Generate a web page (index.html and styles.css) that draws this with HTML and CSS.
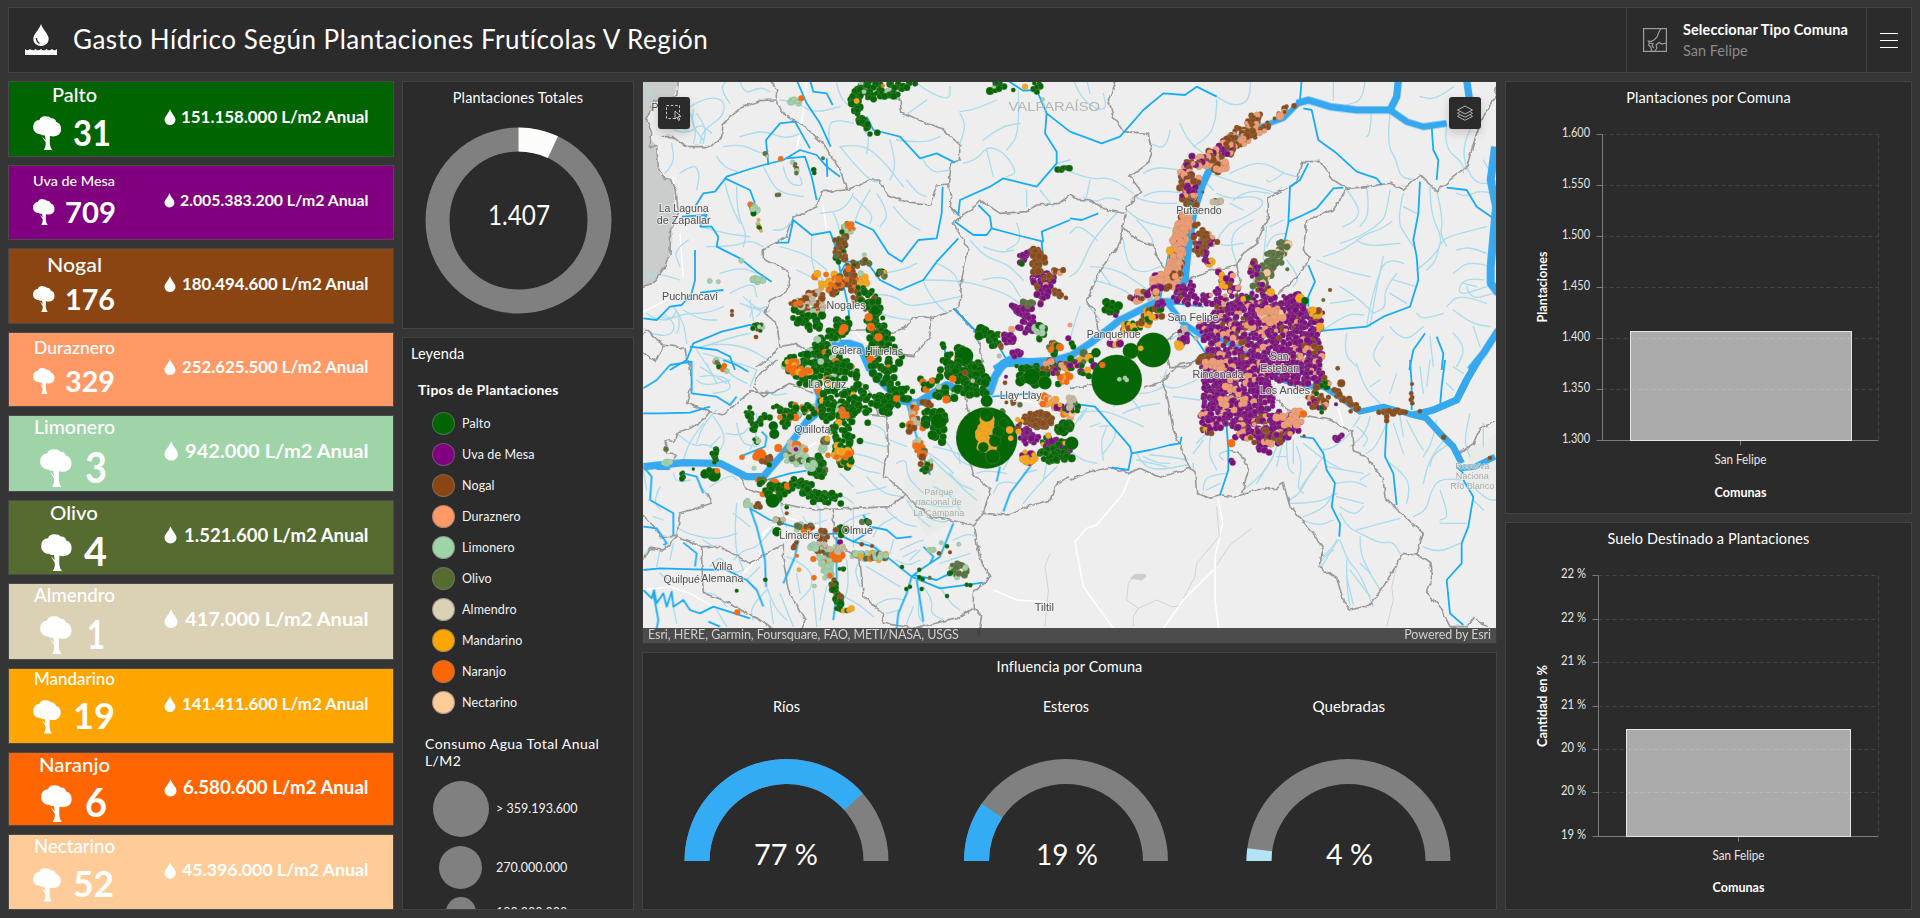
FILE: index.html
```html
<!DOCTYPE html>
<html lang="es">
<head>
<meta charset="utf-8">
<title>Gasto Hídrico Según Plantaciones Frutícolas V Región</title>
<link rel="stylesheet" href="styles.css">
</head>
<body>
<div class="dashboard">
  <header class="header">
    <svg class="brand" width="32" height="32" viewBox="0 0 32 32"><path d="M16 0C14 6 8.300 10.500 8.300 15A7.700 7 0 0 0 23.700 15C23.700 10.500 18 6 16 0Z" fill="#fff"/><path d="M11.500 14Q11.500 18 14.500 19.500" fill="none" stroke="#2b2b2b" stroke-width="1.300"/><path d="M0 25Q2.500 27.500 5 25Q8 27.500 10.500 25Q13 27.500 16 25Q19 27.500 21.500 25Q24 27.500 27 25Q29.500 27.500 32 25V31H0Z" fill="#fff"/></svg>
    <h1 class="title">Gasto Hídrico Según Plantaciones Frutícolas V Región</h1>
    <div class="selector">
      <svg width="24" height="24" viewBox="0 0 24 24" fill="none" stroke="#9d9d9d" stroke-width="1.200"><rect x=".6" y=".6" width="22.800" height="22.800"/><path d="M17.500 1L15.500 5L14 9L11 12L8 13.500L5.500 13L6.500 15L5.500 17L7.500 19L9 23M23 15L19 16L16 14.500L13 17L14 20L12 23M6 15L10 15.500L9 18L11 20"/></svg>
      <div><div class="sel-label">Seleccionar Tipo Comuna</div><div class="sel-value">San Felipe</div></div>
    </div>
    <div class="menu"><i></i><i></i><i></i></div>
  </header>
  <main class="columns">
    <section class="cards" id="cards"></section>
    <div class="col-totals">
      <section class="panel totals">
        <h2>Plantaciones Totales</h2>
        <svg width="230" height="210" viewBox="403 118 230 210">
          <circle cx="518.500" cy="220.500" r="81" fill="none" stroke="#808080" stroke-width="24"/>
          <path d="M518.500 127.500A93 93 0 0 1 558 136.300L547.800 158A69 69 0 0 0 518.500 151.500Z" fill="#fcfcfa"/>
          <text x="488" y="225" class="big" font-size="26" textLength="62" lengthAdjust="spacingAndGlyphs">1.407</text>
        </svg>
      </section>
      <section class="panel legend">
        <h2>Leyenda</h2>
        <h3>Tipos de Plantaciones</h3>
        <ul class="swatches">
          <li><b class="c-palto"></b>Palto</li><li><b class="c-uva"></b>Uva de Mesa</li><li><b class="c-nogal"></b>Nogal</li><li><b class="c-duraznero"></b>Duraznero</li><li><b class="c-limonero"></b>Limonero</li><li><b class="c-olivo"></b>Olivo</li><li><b class="c-almendro"></b>Almendro</li><li><b class="c-mandarino"></b>Mandarino</li><li><b class="c-naranjo"></b>Naranjo</li><li><b class="c-nectarino"></b>Nectarino</li>
        </ul>
        <h4>Consumo Agua Total Anual L/M2</h4>
        <ul class="sizes"><li><span><b class="s56"></b></span>&gt; 359.193.600</li><li><span><b class="s43"></b></span>270.000.000</li><li><span><b class="s30"></b></span>180.000.000</li></ul>
      </section>
    </div>
    <div class="col-map">
      <section class="map">
        <svg width="853" height="561" viewBox="643 82 853 561" id="map">
          <defs>
            <filter id="wob" x="630" y="70" width="880" height="590" filterUnits="userSpaceOnUse" color-interpolation-filters="sRGB"><feTurbulence type="fractalNoise" baseFrequency=".14" numOctaves="2" seed="4"/><feDisplacementMap in="SourceGraphic" scale="4.500" xChannelSelector="R" yChannelSelector="G"/></filter>
          </defs>
          <rect x="643" y="82" width="853" height="561" fill="#eee"/>
          <g transform="translate(640 80) scale(.33333)"><path d="M0 0H115L105 40L95 60L60 60L40 65L20 120L35 180L50 200L55 260L65 290L90 300L108 330L115 400L92 450L90 520L75 560L40 610L0 622Z" fill="#cbcdcd"/></g>
          <g class="road" transform="translate(640 80) scale(.33333)"><path d="M500 0L488 110L470 210M548 370L560 450M120 460L130 590M0 700L80 660M640 750L700 810L730 830M100 290L110 400"/></g>
          <g class="road" transform="translate(640 360) scale(.33333)"><path d="M10 690L90 680L150 700L220 740M310 640L360 590L370 520L430 470L540 500M460 290L540 240M1060 690L1130 720L1210 725M1040 110L1130 120L1290 140"/></g>
          <g class="road" transform="translate(1070 360) scale(.33333)"><path d="M180 345L160 400L80 495L50 505L15 545L40 680L130 805L150 840M445 415L458 490L435 590L435 720L446 805M430 630L340 720L280 805M805 145L820 200"/></g>
          <g class="minor"><g transform="translate(1070 360) scale(.33333)"><path d="M440 440L448 530L380 610L375 650L340 715M545 505L480 555L440 615M190 650L175 670L170 720L205 745L190 770L190 800M205 745L260 720L305 740L325 738M985 600L965 680L970 720L950 800"/><path d="M182 655L195 643L225 643L228 650L215 660Z" fill="#cdcdcd"/></g><g transform="translate(640 360) scale(.33333)"><path d="M1230 580L1215 620L1225 690L1215 800"/></g></g>
          <g fill="#e9ebe8"><path transform="translate(640 360) scale(.33333)" d="M800 340L880 310L950 350L1020 400L1030 470L1000 495L940 480L860 530L830 480L790 400Z"/><path d="M1468 450L1496 435V490L1470 480Z"/></g>
          <g id="streams" class="quebradas"></g>
          <g id="borders" class="borders" filter="url(#wob)"></g>
          <g id="esteros" class="esteros"></g>
          <g id="rivers" class="rivers"></g>
          <g id="dots"></g>
          <g id="labels" class="labels"></g>
        </svg>
        <div class="tool tool-left"><svg width="18" height="18" viewBox="0 0 18 18" fill="none" stroke="#c9c9c9"><path d="M1.500 1.500H14.500V14.500H1.500Z" stroke-dasharray="2.500 1.830"/><path d="M10 7V15L12 13L13.500 16.500L14.800 16L13.300 12.500H16Z" fill="#2b2b2b" stroke-width=".9"/></svg></div>
        <div class="tool tool-right"><svg width="18" height="18" viewBox="0 0 18 18" fill="none" stroke="#b5b5b5"><path d="M9 2L16.500 6L9 10L1.500 6ZM3.500 8.200L1.500 9.300L9 13.200L16.500 9.300L14.500 8.200M3.500 11.200L1.500 12.300L9 16.300L16.500 12.300L14.500 11.200"/></svg></div>
        <div class="attribution"><span>Esri, HERE, Garmin, Foursquare, FAO, METI/NASA, USGS</span><span>Powered by Esri</span></div>
      </section>
      <section class="panel influence">
        <h2>Influencia por Comuna</h2>
        <svg width="853" height="220" viewBox="643 688 853 220" id="gauges"></svg>
      </section>
    </div>
    <div class="col-charts">
      <section class="panel chart-a"><h2>Plantaciones por Comuna</h2><svg width="405" height="395" viewBox="1506 118 405 395" id="chartA"></svg></section>
      <section class="panel chart-b"><h2>Suelo Destinado a Plantaciones</h2><svg width="405" height="350" viewBox="1506 559 405 350" id="chartB"></svg></section>
    </div>
  </main>
</div>
<script src="app.js"></script>
</body>
</html>
```

FILE: styles.css
```css
* { box-sizing: border-box; margin: 0; padding: 0; }
body { width: 1920px; height: 918px; overflow: hidden; background: #353535; color: #fff; font-family: Lato, "Open Sans", sans-serif; }
.dashboard { height: 918px; padding: 7px 8px 8px; display: flex; flex-direction: column; gap: 8px; }
.header { height: 66px; background: #2b2b2b; border: 1px solid #434343; display: flex; align-items: center; }
.brand { margin-left: 16px; flex: none; }
.title { margin-left: 16px; padding-bottom: 2px; flex: 1; font-size: 26px; font-weight: 400; white-space: nowrap; letter-spacing: .51px; }
.selector { width: 240px; height: 64px; border-left: 1px solid #434343; display: flex; align-items: center; gap: 16px; padding-left: 16px; white-space: nowrap; line-height: 21px; }
.sel-label { font-size: 14.500px; font-weight: 700; letter-spacing: .1px; }
.sel-value { font-size: 14.500px; color: #8a8a8a; }
.menu { width: 45px; height: 64px; border-left: 1px solid #434343; display: flex; flex-direction: column; gap: 6px; justify-content: center; padding-left: 13px; }
.menu i { width: 18px; height: 1px; background: #fff; }
.columns { display: grid; grid-template-columns: 386px 232px 855px 407px; gap: 8px; height: 829px; }
.cards { display: grid; gap: 8px; grid-template-rows: 76px 75px 76px 75px 77px 75px 77px 76px 74px 76px; }
.card { border: 1px solid #4a4a4a; display: flex; overflow: hidden; }
svg text { fill: #fff; font-family: Lato, sans-serif; }
.num, .liters, .axis-title { font-weight: 700; }
.name { font-weight: 500; }
.panel { background: #2b2b2b; border: 1px solid #434343; overflow: hidden; display: flex; flex-direction: column; }
.panel h2 { font-size: 14.500px; font-weight: 400; text-align: center; height: 36px; line-height: 18px; padding-top: 7px; letter-spacing: .1px; flex: none; }
.influence h2 { height: 35px; padding-top: 5px; }
.col-totals { display: grid; grid-template-rows: 248px 573px; gap: 8px; }
.legend h2 { text-align: left; padding: 7px 0 0 8px; }
.legend h3 { font-size: 14px; font-weight: 700; line-height: 18px; padding-left: 15px; margin-top: 7px; letter-spacing: .25px; }
ul { list-style: none; }
.swatches { margin-top: 9px; }
.swatches li { display: flex; align-items: center; height: 31px; padding-left: 29px; gap: 7px; font-size: 12.500px; letter-spacing: .12px; color: #f2f2f2; }
.swatches b { width: 23px; height: 23px; border-radius: 50%; border: 1px solid rgba(120,120,120,.6); }
.c-palto { background: #006400; } .c-uva { background: #800080; } .c-nogal { background: #8b4513; } .c-duraznero { background: #ff9966; } .c-limonero { background: #9ed4a8; } .c-olivo { background: #556b2f; } .c-almendro { background: #dbd1b4; } .c-mandarino { background: #ffa500; } .c-naranjo { background: #ff6600; } .c-nectarino { background: #ffcc99; }
.legend h4 { font-size: 14px; font-weight: 400; line-height: 17px; margin: 17px 20px 0 22px; letter-spacing: .42px; }
.sizes { margin-top: 6px; flex: none; }
.sizes li { display: flex; align-items: center; height: 50px; font-size: 12.500px; gap: 7px; padding-left: 29px; color: #f2f2f2; }
.sizes li:first-child { height: 67px; }
.sizes li:last-child { height: 40px; }
.sizes span { width: 57px; display: flex; justify-content: center; }
.sizes b { border-radius: 50%; background: #808080; }
.s56 { width: 56px; height: 56px; } .s43 { width: 43px; height: 43px; } .s30 { width: 30px; height: 30px; }
.col-map { display: grid; grid-template-rows: 563px 258px; gap: 8px; }
.col-charts { display: grid; grid-template-rows: 433px 388px; gap: 8px; }
.map { position: relative; border: 1px solid #3a3a3a; overflow: hidden; }
.map > svg { display: block; }
.tool { position: absolute; top: 15px; width: 32px; height: 32px; border-radius: 3px; background: #2b2b2b; display: flex; align-items: center; justify-content: center; box-shadow: 0 4px 10px rgba(0,0,0,.18); }
.tool-left { left: 15px; } .tool-right { right: 15px; }
.attribution { position: absolute; left: 0; right: 0; bottom: 0; height: 15px; background: rgba(54,54,54,.88); color: #cfcfcf; font-size: 12.500px; line-height: 14px; letter-spacing: -.07px; display: flex; justify-content: space-between; padding: 0 5px; }
.quebradas { fill: none; stroke: #a8dcee; stroke-width: 3.900; stroke-linejoin: round; stroke-linecap: round; }
.borders { fill: none; stroke: #999; stroke-width: 4.800; stroke-linejoin: round; }
.esteros { fill: none; stroke: #17acf8; stroke-width: 5.400; stroke-linejoin: round; }
.rivers { fill: none; stroke: #35a8f0; stroke-linejoin: round; }
.road { fill: none; stroke: #fff; stroke-width: 4.500; }
.minor { fill: none; stroke: #cdcdcd; stroke-width: 2.500; }
.labels text { font-family: "Liberation Sans", Arial, sans-serif; fill: #4f4f4f; stroke: rgba(240,240,240,.75); stroke-width: 2px; paint-order: stroke; text-anchor: middle; }
.labels .region { fill: #b5b5b5; stroke: none; }
.labels .park { fill: #a3aaa3; stroke-width: 1px; }
.grid-line { stroke: #434343; stroke-dasharray: 4 3; }
.axis { stroke: #7b7b7b; }
.tick-label { fill: #e4e4e4; font-size: 12.500px; }
```

FILE: app.js
```js
const NS = "http://www.w3.org/2000/svg";
const byId = id => document.getElementById(id);

// Indicator cards: name box, tree icon, count and water use. Coordinates are relative to the page.
const cards = [
  ["Palto", "#006400", 81, 76, 52, 97, 102, 20, 33, 116, 34, "31", 73, 111, 146, 36, "151.158.000", 181, 123.3, 17, 109, 16],
  ["Uva de Mesa", "#800080", 165, 75, 33, 115, 186, 14, 33, 199, 26, "709", 65, 116, 222.7, 28, "2.005.383.200", 180, 206, 15.5, 193, 14.5],
  ["Nogal", "#8b4513", 248, 76, 47, 102, 272, 20, 33, 286, 26, "176", 65, 115, 310, 28.5, "180.494.600", 182, 290.3, 17, 276, 16],
  ["Duraznero", "#ff9966", 332, 75, 34, 115, 354.3, 17, 33, 368, 26, "329", 65, 115, 392, 28.5, "252.625.500", 182, 373.3, 17, 359, 16],
  ["Limonero", "#9ed4a8", 415, 77, 34, 115, 434.3, 18.5, 40, 449, 38, "3", 85, 107, 482.7, 41.5, "942.000", 185, 457.7, 19, 441, 19.5],
  ["Olivo", "#556b2f", 500, 75, 50, 98, 520.3, 20, 41, 534, 37, "4", 84, 107, 566, 39.5, "1.521.600", 184, 542.3, 18, 526, 17.5],
  ["Almendro", "#dbd1b4", 583, 77, 34, 115, 602.3, 18.5, 40, 616, 38, "1", 87, 105, 648.7, 41, "417.000", 185, 625.7, 19, 609, 19],
  ["Mandarino", "#ffa500", 668, 76, 34, 115, 685.3, 17, 33, 700, 33.5, "19", 73, 115, 728.7, 36.5, "141.411.600", 182, 710.3, 17, 696, 16],
  ["Naranjo", "#ff6600", 752, 74, 39, 110, 771.7, 19, 41, 785, 37, "6", 85, 107, 817.3, 40, "6.580.600", 183, 793.7, 18, 779, 17.5],
  ["Nectarino", "#ffcc99", 834, 76, 34, 115, 853, 18.5, 33, 868, 33.5, "52", 73, 114, 896.7, 36.5, "45.396.000", 182, 876.3, 17.5, 862, 16.5]
];
const fit = (cls, x1, x2, y, size, text) =>
  `<text class="${cls}" x="${x1}" y="${y}" font-size="${size}" textLength="${x2 - x1}" lengthAdjust="spacingAndGlyphs">${text}</text>`;
const tree = "M14 .5C11 -.5 7.500 .500 6.500 4C3 4 .3 7 .3 10.500C-.5 15 3 18.500 7.500 18.500C8.500 19.500 11 20 12 19.500L12.800 24.500L9 20.500L12.900 27C13 30 12.500 32 11 34.500H19.500C17.500 32 17 29 17 26L17.200 20C20 21.500 28 21 28.500 14C28.800 9.500 27 7 23.500 6C23 3.500 20.500 2 18.500 2.500C17.500 1 16 .5 14 .5Z";
const drop = "M5.500 0C4.500 4 0 7.500 0 10.800A5.500 5.200 0 0 0 11 10.800C11 7.500 6.500 4 5.500 0Z";
byId("cards").innerHTML = cards.map(([n, c, top, h, n1, n2, ny, ns, tx, ty, th, v, v1, v2, vy, vs, w, w1, wy, ws, dy, dh]) =>
  `<article class="card" style="background:${c}"><svg width="384" height="${h - 2}" viewBox="9 ${top + 1} 384 ${h - 2}">
  ${fit("name", n1, n2, ny, ns, n)}
  <path fill="#fff" transform="translate(${tx} ${ty}) scale(${th / 34.5})" d="${tree}"/>
  ${fit("num", v1, v2, vy, vs, v)}
  <path fill="#fff" transform="translate(164.500 ${dy}) scale(${dh / 16})" d="${drop}"/>
  ${fit("liters", w1, 368.5, wy, ws, w + " L/m2 Anual")}</svg></article>`).join("");

// Half-ring gauges
const ring = (cx, cy, f1, f2, color) => {
  const p = (r, f) => `${cx - r * Math.cos(Math.PI * f)} ${cy - r * Math.sin(Math.PI * f)}`;
  return `<path fill="${color}" d="M${p(102, f1)}A102 102 0 0 1 ${p(102, f2)}L${p(77, f2)}A77 77 0 0 0 ${p(77, f1)}Z"/>`;
};
byId("gauges").innerHTML = [
  [786.5, 0.77, "#33acf5", "77 %", 754, 818, "Ríos", 773, 800],
  [1066, 0.19, "#33acf5", "19 %", 1036, 1098, "Esteros", 1043, 1089],
  [1348.5, 0.04, "#b3e3f4", "4 %", 1326, 1373, "Quebradas", 1312.5, 1385]
].map(([x, f, c, t, a, b, l, la, lb]) => ring(x, 861, 0, 1, "#808080") + ring(x, 861, 0, f, c) +
  fit("big", a, b, 865, 29.5, t) + fit("lab", la, lb, 711.5, 14.5, l)).join("");

// Column charts
function chart(id, axisX, right, ys, labels, labelL, labelR, bar, catX, catY, titleY, vTitle, vLen, vY) {
  let s = "";
  ys.forEach((y, i) => {
    if (i < ys.length - 1) s += `<path class="grid-line" d="M${axisX} ${y}H${right}"/>`;
    s += `<path class="axis" d="M${axisX - 6} ${y}H${axisX}"/>` + fit("tick-label", labelL, labelR, y + 2, 12.5, labels[i]);
  });
  const base = ys[ys.length - 1];
  s += `<path class="grid-line" d="M${right} ${ys[0]}V${base}"/>`;
  s += `<path class="axis" d="M${axisX} ${ys[0]}V${base}H${right}M${catX} ${base}v5" fill="none"/>`;
  s += `<rect x="${bar[0]}" y="${bar[1]}" width="${bar[2] - bar[0]}" height="${base - bar[1]}" fill="#ababab" stroke="#e6e6e6"/>`;
  ys.forEach(y => { if (y > bar[1] && y < base) s += `<path stroke="#b8b8b8" stroke-dasharray="4 3" d="M${bar[0]} ${y}H${bar[2]}"/>`; });
  s += fit("tick-label", catX - 26, catX + 26, catY, 12.5, "San Felipe") + fit("axis-title", catX - 26, catX + 26, titleY, 12.5, "Comunas");
  s += `<g transform="translate(1547 ${vY}) rotate(-90)">${fit("axis-title", -vLen / 2, vLen / 2, 0, 12.5, vTitle)}</g>`;
  byId(id).innerHTML = s;
}
chart("chartA", 1602.5, 1878.5, [134.5, 185.5, 236.5, 287.5, 338.5, 389.5, 440.5],
  ["1.600", "1.550", "1.500", "1.450", "1.400", "1.350", "1.300"], 1562, 1590, [1630.5, 331.5, 1851.5], 1740.5, 464.3, 496.5, "Plantaciones", 71, 287);
chart("chartB", 1598.5, 1878.5, [575.5, 619.5, 662.5, 706.5, 749.5, 792.5, 836.5],
  ["22 %", "22 %", "21 %", "21 %", "20 %", "20 %", "19 %"], 1561, 1586, [1626.5, 729.5, 1850.5], 1738.5, 860.3, 892, "Cantidad en %", 82, 706);

// Map layers, digitised on four sheets at a scale of 3 units per pixel
const origin = { A: [640, 80], B: [1070, 80], C: [640, 360], D: [1070, 360] };
const pts = s => s.split(" ").map(p => p.split(",").map(Number));
const curve = s => {
  const P = pts(s);
  let d = `M${P[0]}`;
  for (let i = 1; i < P.length - 1; i++) d += `Q${P[i]} ${(P[i][0] + P[i + 1][0]) / 2},${(P[i][1] + P[i + 1][1]) / 2}`;
  return d + `L${P[P.length - 1]}`;
};
const layer = (id, sheets) => {
  byId(id).innerHTML = Object.entries(sheets).map(([k, list]) =>
    `<g transform="translate(${origin[k]}) scale(.33333)">` + list.map(p => {
      const [d, w] = p.split("|");
      return id === "streams" ? `<path d="${curve(d)}"/>` : `<polyline points="${d}"${w ? ` stroke-width="${w}"` : ""}/>`;
    }).join("") + "</g>").join("");
};
layer("borders", {
  A: ["115,0 110,50 70,58 40,65 20,120 35,160 30,200 50,200 55,260 65,290 90,300 108,330 115,400 92,450 90,520 75,560 40,610 0,622",
    "65,170 100,170 140,200 215,200 245,170 250,130 300,85 360,62 405,60",
    "390,0 410,30 408,65 440,110 500,145 550,190 600,270 620,330", "620,330 545,335 530,380 460,415 440,470 370,510 370,535 440,570 450,595 440,635 390,660 375,700 410,730 420,800",
    "620,330 690,300 715,300 745,345 810,370 870,375 890,315 925,312 935,250 958,240 960,195 905,145 820,115 785,100 780,60 760,40",
    "925,312 935,350 930,380 960,410 940,430 985,505 965,600 960,680 880,715 850,710 815,715 800,740 755,760 710,750 630,750",
    "960,410 990,390 1020,360 1080,400 1160,395 1190,375 1260,370 1290,345", "940,685 1010,760 1025,830 1030,870",
    "875,715 870,770 820,830 745,820 700,815", "0,780 20,750 70,795 45,845 0,810", "70,795 135,805 145,870", "420,800 470,790 540,840 600,860", "415,800 385,840 350,860"],
  B: ["140,0 115,60 130,110 160,155 235,160 245,220 235,250 180,290 215,335 170,380 158,440 150,490 90,570 50,665 75,690 85,760",
    "0,345 20,358 60,360 110,390 160,400", "158,440 200,480 250,495 265,540 290,570", "330,620 370,590 410,575 500,555 520,520 560,490 595,410 595,350 680,310 695,245 750,245 790,300 830,325 790,390 710,420 700,510 720,530 700,570 660,610 615,650 625,690",
    "500,555 510,600 500,650", "830,325 890,320 960,310 1000,328 1050,285 1100,335 1140,300 1190,260 1220,160 1240,110 1270,60 1280,20", "390,830 350,860 300,860 280,790 340,740"],
  C: ["340,80 370,110 450,70 520,100", "145,0 155,70 140,130 210,155 185,185 150,205 115,215 105,245 75,240 80,280 110,285 90,310 20,315", "210,155 250,165 330,95 385,100",
    "345,75 350,50 410,0", "300,350 320,385 380,405 420,430 520,450 640,445 750,440 795,405 780,390 730,345 735,310 745,280 740,170 690,165 715,165 700,110 650,50 620,10",
    "200,400 215,430 120,460 110,530 60,530 40,500 0,460", "110,530 185,560 185,600 190,700 250,720 300,750 360,780 400,810", "10,600 30,565 70,570 110,530", "185,560 240,560 330,610 400,570 430,555 430,600 445,690 495,780 480,820",
    "580,450 580,530 620,570 660,600 670,710 730,760 730,790 830,805 960,770 1000,745 1000,700 1050,650 1020,600 1000,495 930,480 870,470 795,405",
    "1000,745 1025,770 1015,830", "1000,495 1030,460 1100,465 1160,440 1230,420 1250,370 1290,350", "970,90 990,180 985,290 1000,340 1050,390 1030,460"],
  D: ["0,360 60,335 120,322 175,340 210,325 270,352 360,325 310,210 290,100 275,65 220,85", "275,65 330,10 400,0", "0,85 40,80 90,65 160,80",
    "360,325 375,335 380,400 420,415 460,405 500,412 550,390 620,385 640,370 660,440 730,520 760,570 745,620 800,655 820,720 840,750 900,735 940,680 1000,580 1040,585 1060,520 945,415 940,360 890,290 850,275 845,215 780,180 700,165 640,140 610,110",
    "515,400 535,330 510,280 480,270", "1040,585 1080,605 1085,660 1070,700 1110,740 1140,800 1190,800 1210,775 1250,800", "1275,185 1230,205 1210,250 1170,280"]
});
layer("esteros", {
  A: ["510,0 520,35 560,40 578,75", "470,0 500,70 540,130 572,200", "385,255 378,180 420,130 465,125 510,205", "165,380 190,340 225,335 260,290 320,270 370,255 430,240 480,210 530,225 560,260 600,290", "440,235 495,230 515,290 530,360", "255,295 330,330 345,370",
    "560,235 562,290", "180,440 215,440 235,470 230,500 300,535 350,575 395,605", "165,510 165,600 155,640 125,675 90,680 50,720 10,715", "180,638 250,630", "125,410 200,405 180,440",
    "410,488 445,488 460,420 515,465 570,455 590,510 600,570 625,680 630,750", "645,425 700,450 745,520 785,545 835,480 890,475 905,400 908,320", "600,580 620,545 680,545 720,600 780,630 850,600 890,545 955,475", "690,15 700,30",
    "680,110 700,150 780,170 840,235 890,220 945,248", "945,425 1000,465 1040,465 1055,445 1130,465 1210,485", "1015,375 1050,410 1055,445", "955,405 960,360 1050,320 1090,295 1190,320 1250,250 1250,215 1215,160 1220,100 1290,155", "1100,0 1150,32 1190,30 1220,100", "1210,485 1205,455 1290,420", "940,685 1015,760 1060,770 1100,840", "90,870 140,840 160,790 245,755 330,735 360,740", "150,800 230,810 270,830 285,870", "915,790 915,840", "1205,485 1210,540"],
  B: ["0,155 95,190 150,170 220,90 280,40 345,45 380,20 440,50", "695,0 690,60", "700,85 725,90 745,180 800,220 860,275 920,295 935,315", "0,415 35,420 85,400", "715,250 690,300 660,320 655,430 640,500 580,560 550,610 545,660", "655,425 700,405 740,385 790,325 820,323", "1085,140 1090,210 1105,240 1100,300", "1050,305 1045,400 1030,480 1040,530 1045,600 1020,680 940,710 890,740 760,752 700,770", "1130,323 1190,330 1220,380 1270,415", "715,555 735,605 715,650 715,680",
    "1065,760 1030,810 1018,870", "1100,770 1120,820 1115,870", "310,670 400,680", "340,740 380,780 420,840", "300,500 285,580 270,660"],
  C: ["10,85 50,60 90,15 155,5 155,100 230,110 270,135 290,110", "10,160 60,160 150,158 210,140", "250,0 290,15 325,35", "10,320 35,350 30,420 100,460 100,525", "130,340 170,350 190,400", "300,290 375,260 380,230 365,215", "380,360 450,340 500,332", "330,445 350,500 375,600 378,680", "330,445 390,480 480,505 530,525 590,520 640,545 700,560 740,590 815,650 900,685 1030,668",
    "10,500 50,505 80,550 70,555", "130,548 170,580 165,620", "10,630 60,625 165,628 260,630 320,660 350,690 370,740", "10,690 35,715 42,690 50,730 70,700 80,740 95,695 100,740 130,720 150,750 180,760 220,740 330,775", "40,700 55,780 50,805", "670,465 690,500 740,510 770,535 815,530", "640,545 680,520 700,505", "815,650 840,630 900,590 940,490", "850,560 880,590 870,610", "815,650 800,700 775,760 770,805", "830,660 840,720 850,785", "820,645 890,660 930,640", "475,540 465,590 430,670", "590,530 590,700 580,780", "800,130 830,230 870,345", "1165,290 1170,320 1110,400 1090,455", "1080,320 1070,365", "205,785 240,800", "1055,110 1180,100", "530,530 550,570 580,610"],
  D: ["0,130 75,140 180,260 185,280 240,270 300,255 330,250 335,230", "185,280 175,330 125,322", "405,70 420,130 470,200 475,270 475,330 450,405", "690,230 730,235 760,280 770,330 795,370 785,440 810,490 808,530", "1020,0 1025,70 1025,150", "1125,0 1115,80 1110,140", "950,180 945,290 970,340 980,435", "1180,360 1210,410 1195,500 1175,550 1175,610 1130,660 1140,760 1180,795", "1180,340 1160,320"]
});
layer("rivers", {
  A: ["500,870 540,830 590,790 630,790 660,800 690,870|22", "1065,870 1110,840 1200,855 1290,830|26"],
  B: ["260,665 310,665 345,600 355,500 370,400 395,320 420,265|22", "345,600 365,470 375,400|12", "415,270 460,220 490,180 560,145 640,115 690,65|16", "680,70 715,60 780,80 860,90 960,90 980,50 985,0|22", "960,90 1010,125 1060,140 1130,130|20", "1190,0 1200,70|22", "-10,835 60,790 150,720 260,665|22", "285,660 340,730 400,770 460,780 520,815 580,850|18", "1275,200 1262,300 1278,380 1262,560 1262,610 1285,640|24", "1285,750 1240,820 1200,870|22"],
  C: ["10,320 60,315 130,308 240,310 320,350 370,350 430,280 500,185 530,160 540,110 520,60 525,0|22", "680,0 700,40 780,120 830,130 920,75 960,90 1050,95 1065,50 1090,10 1290,0|24", "50,320 90,320|20"],
  D: ["580,0 640,60 700,80 760,80 800,105 870,155 940,140 1030,165 1070,175|18", "1030,165 1090,150 1160,120 1190,60 1225,0|22", "1060,165 1110,220 1150,260 1175,310|20", "1170,325 1215,320 1275,290|18"]
});
layer("streams", {
  A: ["150,80 200,50 255,60 250,110 190,150 180,190", "70,110 90,150 150,160 180,130 215,160", "270,70 240,30 260,0", "300,0 310,45 360,20 390,35", "420,60 470,65 520,100 600,80", "250,200 300,190 360,220 385,215", "120,280 160,250 180,280 170,330", "75,280 105,250 95,190", "230,230 250,260 290,275", "255,310 270,370 300,430", "290,320 290,400 320,460 310,500", "370,260 400,320 430,340 490,350", "430,260 440,310 490,320 480,290", "480,160 440,180 370,150 300,170",
    "590,10 600,60 650,90", "600,200 640,250 700,310 720,300", "570,200 560,130 600,120 640,130", "680,220 690,170 670,150", "750,180 770,250 750,300", "770,180 850,190 900,170", "860,60 790,110", "830,10 870,40 930,60 930,20", "600,200 660,190 720,230 790,320", "800,300 830,340 860,350", "850,240 870,280 930,270", "640,340 620,390 540,400", "580,400 600,440 600,490", "470,400 440,450 400,450", "690,330 660,380 645,425", "760,380 800,430 840,450", "710,340 750,400 720,440", "640,350 700,400 690,430",
    "200,500 280,500 330,480 370,500", "240,580 300,560 350,580", "270,640 340,600 350,650", "120,600 60,580 10,590", "70,700 110,730 90,770 30,760", "100,680 130,720 140,790", "130,690 180,720 230,720", "310,650 350,690 380,680", "320,680 370,690 350,710", "330,660 340,720", "180,800 230,790 320,800 400,850", "170,810 210,870", "190,820 300,850 350,870", "190,800 280,770 330,760", "180,440 250,460 330,470", "145,480 100,510 120,560", "20,700 60,730 130,700 200,700 250,680",
    "420,500 500,520 560,570", "515,470 510,560 550,600", "470,570 530,600 590,620", "630,640 700,640 770,650 800,680 870,670 960,650", "700,640 690,680 740,710 810,720", "850,605 870,650 920,700", "850,600 930,600 1000,610 1100,640 1150,680", "890,550 940,570 960,620", "1030,600 1100,580 1140,650", "990,480 1030,530 1100,550 1150,600", "1030,500 1080,520 1120,510", "960,190 980,140 960,100", "970,250 1010,240 1040,200 1080,210 1110,240 1130,280 1100,290", "1040,210 1060,290", "1135,35 1140,160 1100,210", "1030,180 1080,140 1140,130", "960,95 1000,90 1070,60", "1130,430 1150,480 1100,510", "1160,330 1160,380", "1200,330 1240,380", "1250,250 1290,240", "730,580 790,570 830,550", "620,620 550,620 520,590", "20,20 40,60", "160,90 150,130 190,180", "90,80 110,140 140,150", "170,100 200,140 190,190", "150,100 170,150 160,190", "110,690 100,720 60,710", "115,700 120,740 110,760", "340,680 380,700 390,690", "300,670 340,680 330,710"],
  B: ["10,0 30,50 80,90 110,85 100,40", "50,0 60,40", "540,0 545,60 490,80 440,50", "440,60 440,150 370,200", "330,130 350,180 400,220", "300,150 290,210 240,190", "790,0 790,60", "885,0 880,60 830,75", "905,90 900,160 890,170", "960,100 950,190 980,240 990,290 1030,300", "1150,20 1100,60 1050,50", "1130,140 1120,200 1180,250 1180,280", "1200,150 1170,210 1210,310 1270,310", "1240,240 1280,310", "480,280 540,250 590,250 640,280 680,290", "420,280 500,310 560,320 620,340", "640,280 600,310 590,300", "440,340 480,360 550,345 590,370 530,410 480,430", "480,370 520,390", "490,360 530,330 600,340", "0,275 60,300 120,290 190,340", "60,300 50,350", "40,350 70,370 110,350 150,360", "140,400 70,470 30,570 0,590", "80,480 30,430 0,460", "220,280 250,260 330,270", "190,350 240,370 320,370", "220,350 250,330 350,340", "170,390 200,420 280,440 330,450", "200,420 240,460 250,490", "160,480 170,560 220,580 270,560", "60,560 130,560 220,620 250,640", "70,600 150,620 200,660", "90,570 120,610", "430,330 400,300", "480,430 440,470 450,500 520,490", "550,420 500,440 480,490 500,550", "590,440 580,540", "600,440 640,420", "650,460 610,460 590,500", "650,540 690,590 670,620",
    "830,330 870,380 860,420 820,440", "890,320 900,400 870,440", "960,330 950,400 930,430 870,470 810,490", "965,425 930,450 890,460 820,510 760,530", "860,480 880,500 990,490", "1000,340 980,420 1010,470 1030,500", "1000,380 1040,400", "1080,310 1080,400 1120,480 1090,530 1040,570", "1100,330 1120,420 1110,460 1130,500", "1270,340 1230,330 1190,350 1160,340", "1250,440 1170,460 1110,480 1100,540 1070,570", "1250,520 1200,500 1160,510", "1260,560 1200,540 1150,580", "1240,600 1180,590 1160,650 1250,620", "1250,670 1170,640 1130,680", "1000,550 950,530 920,600 900,680 890,740", "940,530 920,620 900,740", "970,600 1040,620", "960,640 1010,670", "810,620 860,650 910,700", "740,540 810,570 900,590", "780,670 850,660", "760,750 830,700 880,705", "830,760 820,820 860,860", "960,740 1000,790 1060,740", "940,770 900,820 930,860", "1080,770 1090,860", "1150,690 1200,730 1260,740", "1150,760 1190,800 1160,860", "1210,740 1230,800", "1120,700 1060,720 1040,700", "980,580 940,630 950,680 910,700", "1220,620 1180,610", "1190,620 1200,660 1270,640", "30,680 10,740 0,780", "50,670 90,720", "300,780 350,750"],
  C: ["230,150 190,190 170,250", "220,170 260,220 240,280 200,250 160,260 110,220", "260,220 300,230 330,200", "190,190 150,240 130,300", "210,260 240,230", "350,30 330,80", "180,50 250,40 280,90 220,100", "180,20 260,70", "200,10 230,70", "170,60 190,80 270,60", "250,0 260,40 320,70", "440,100 400,110 380,90", "290,190 300,250 350,260", "350,160 350,230 330,270", "680,190 730,200 740,240", "650,240 690,250 740,260", "620,300 660,330 720,340", "640,280 690,290 730,310", "650,400 700,390 740,380", "680,350 720,400 790,410", "460,380 520,420 540,450", "540,420 600,400 640,430", "600,340 640,380", "520,300 480,320", "150,360 110,370 100,340", "210,380 270,340 290,360", "200,400 180,380", "750,240 800,260", "770,310 800,290 800,350 850,400", "870,200 920,240 950,300 1000,320", "850,270 900,300 940,340", "880,260 930,270 970,290", "870,290 950,370 1000,390", "900,230 880,200", "960,310 950,250 1000,240", "930,340 960,380 1010,420", "880,380 930,400 960,450", "800,420 830,470 870,500", "840,420 870,440 940,440", "1010,340 1030,330 1100,340", "1190,330 1150,340", "1110,290 1090,330", "1220,310 1210,360", "1130,370 1080,360 1060,400", "1250,320 1190,380 1150,430", "10,330 20,390", "60,380 40,420 60,450", "110,500 130,520 230,540 290,520", "290,430 280,550 310,630", "280,460 330,500", "40,470 70,480", "400,500 360,560 310,570 280,600", "220,560 190,540", "210,620 240,580 260,630", "60,570 50,620", "280,640 310,630", "360,620 320,660", "380,690 330,740 340,780", "380,680 400,740 440,780", "420,700 460,800", "390,720 400,790", "440,590 510,620 520,680 480,720", "470,640 480,700", "520,690 530,800", "570,580 520,600", "590,700 640,720 700,770", "560,680 540,780", "670,590 640,620 660,680", "620,600 630,680 600,740", "680,620 730,650 780,680", "740,600 720,560 660,540", "770,600 800,620 840,600", "780,570 820,550 850,540", "790,590 830,570", "810,600 840,570", "750,580 760,540", "690,460 640,470 600,500", "770,470 720,490 700,530", "740,450 780,490 830,500", "860,470 900,490 930,480", "940,540 980,520 1010,530", "900,610 990,580", "920,650 980,640", "900,680 930,730 960,750", "850,680 880,720 870,760 910,780", "840,700 830,760 850,790", "790,720 750,710 700,740", "780,750 740,760", "820,740 800,790", "100,550 90,600", "30,560 10,590", "60,640 90,670 130,660", "100,740 110,790", "260,740 230,700 190,700", "230,750 260,800", "640,440 640,560", "490,470 500,500 560,480", "420,430 440,500", "540,450 540,520"],
  D: ["30,180 60,130 30,170 10,200", "90,200 130,190 140,230 100,280", "100,300 90,250 110,200", "0,270 30,300 80,310", "60,200 90,190", "200,280 220,320 270,330 350,315", "240,285 300,290 350,300", "200,300 290,320", "220,290 260,310 300,310", "160,160 200,140 270,130", "0,160 80,150 130,160 220,200", "130,140 180,100 240,100 280,80", "180,110 210,150", "290,30 270,70 310,90 380,60", "310,110 390,120", "380,250 410,220 440,190 480,200", "370,280 400,240", "430,190 410,270 440,330", "480,270 440,280 460,300", "400,390 400,360 430,345 470,340", "410,390 450,370", "370,310 370,330", "520,390 560,360 600,310 620,260", "560,370 610,290", "640,240 620,320", "650,240 650,320 670,340", "670,240 670,310", "620,290 650,290", "680,260 700,310 680,380 700,400", "740,320 700,370 690,390", "760,290 720,340 690,400 660,420", "700,250 760,300 820,330", "660,430 740,430 800,400", "700,470 760,450 790,400", "700,480 740,500 790,480", "800,370 850,360 890,380", "770,320 820,330 880,340", "800,410 880,430", "810,440 850,470 880,440", "810,460 830,500 870,520 930,550 970,545 990,580", "860,510 900,500 990,475", "870,530 870,580 900,640 930,690", "870,610 900,640", "760,590 790,560 800,540", "810,540 830,600 870,640 910,740", "830,600 830,680 840,735", "840,630 900,710", "790,570 750,600 755,620", "755,620 790,560 805,540", "850,735 830,650", "900,340 870,360", "950,190 920,260 890,280", "970,190 1000,280", "990,170 1000,230", "1010,180 1040,240 1060,270", "900,170 890,220 840,260", "870,170 850,200", "860,200 900,230 880,260", "1100,180 1090,240 1060,290", "1130,230 1080,290 1060,370", "1140,250 1090,280 1080,320", "960,310 1000,340 1020,380 1010,430", "1170,360 1110,350 1080,400 1070,450 1030,470", "1110,390 1140,470 1110,480", "1190,370 1150,370", "1110,490 1190,490", "1210,380 1250,420 1280,420", "1060,560 1100,580 1170,550", "1210,420 1240,450", "860,10 880,80 930,130", "930,60 900,80", "980,40 960,100", "1050,20 1060,100", "1080,0 1070,80", "1150,20 1180,40", "1150,90 1130,70", "1200,160 1180,240 1200,290", "840,220 800,260 760,270", "540,200 560,160 610,150", "1240,190 1240,260"]
});

// Plantation symbols
const palette = { p: "#056605", u: "#7f0f80", n: "#8b4a1c", d: "#f39b74", l: "#a3cfab", o: "#5b7040", a: "#c4b9a4", m: "#fba51a", j: "#fd6a0b", e: "#fbc797" };
let seed = 7;
const rnd = () => (seed = (seed * 16807) % 2147483647) / 2147483647;
const out = [];
const dot = (k, x, y, r, c) => out.push(`<circle cx="${(origin[k][0] + x / 3).toFixed(1)}" cy="${(origin[k][1] + y / 3).toFixed(1)}" r="${(r / 3).toFixed(1)}" fill="${palette[c]}" stroke="#8c9c80" stroke-opacity=".55" stroke-width=".45"/>`);
const pick = s => s[Math.floor(rnd() * s.length)];
function blob(k, x, y, rx, ry, n, r, cs) {
  for (let i = 0; i < n; i++) {
    const a = rnd() * 6.283, q = Math.sqrt(rnd());
    dot(k, x + Math.cos(a) * q * rx, y + Math.sin(a) * q * ry, r * (.75 + rnd() * .5), pick(cs));
  }
}
function area(k, s, step, r, cs, keep = 1) {
  const P = pts(s), xs = P.map(p => p[0]), ys = P.map(p => p[1]);
  step *= .9;
  for (let y = Math.min(...ys); y < Math.max(...ys); y += step)
    for (let x = Math.min(...xs); x < Math.max(...xs); x += step) {
      const px = x + (rnd() - .5) * step * 1.3, py = y + (rnd() - .5) * step * 1.3;
      let hit = false;
      P.forEach(([ax, ay], i) => { const [bx, by] = P[(i + 1) % P.length]; if ((ay > py) !== (by > py) && px < (bx - ax) * (py - ay) / (by - ay) + ax) hit = !hit; });
      if (hit && rnd() < keep) dot(k, px, py, r * (.75 + rnd() * .5), pick(cs));
    }
}
function trail(k, s, spread, n, r, cs) {
  const P = pts(s);
  for (let i = 0; i < n; i++) {
    const t = (i + rnd()) / n * (P.length - 1), j = Math.min(Math.floor(t), P.length - 2), f = t - j;
    dot(k, P[j][0] + (P[j + 1][0] - P[j][0]) * f + (rnd() - .5) * spread, P[j][1] + (P[j + 1][1] - P[j][1]) * f + (rnd() - .5) * spread, r * (.75 + rnd() * .5), pick(cs));
  }
}
// north
trail("A", "670,10 640,60 655,110 680,140", 22, 45, 10, "ppppppppppp");
area("A", "655,5 850,5 800,30 760,55 690,60 630,85 635,50", 14, 9, "ppppppppppppl");
dot("A", 690, 162, 8, "p"); dot("A", 712, 158, 10, "p"); dot("A", 672, 35, 7, "l"); dot("A", 728, 17, 6, "j"); dot("A", 650, 63, 8, "m");
blob("A", 465, 63, 20, 8, 8, 8, "l"); dot("A", 484, 55, 9, "j");
dot("A", 1050, 33, 12, "p"); blob("A", 1075, 18, 18, 14, 9, 9, "plp"); blob("A", 1190, 22, 12, 16, 9, 8, "p"); dot("A", 1155, 20, 9, "m"); dot("A", 1120, 30, 7, "p"); dot("A", 1208, 58, 6, "l");
trail("A", "1255,268 1290,268", 10, 8, 8, "p");
trail("A", "375,218 384,232", 3, 3, 7, "ola"); dot("A", 422, 236, 8, "j"); trail("A", "460,245 472,282", 6, 6, 7, "onl"); dot("A", 521, 269, 8, "p"); dot("A", 523, 279, 7, "p"); dot("A", 549, 235, 6, "o"); dot("A", 411, 345, 7, "o"); dot("A", 417, 344, 7, "o");
trail("A", "332,370 338,385", 10, 7, 8, "jj"); blob("A", 344, 393, 8, 14, 8, 9, "lpl"); trail("A", "354,420 355,440 366,455", 5, 6, 7, "lpm");
blob("A", 352, 599, 18, 10, 9, 9, "l"); dot("A", 209, 603, 8, "l"); dot("A", 235, 605, 7, "l"); dot("A", 304, 542, 8, "l"); dot("A", 276, 693, 6, "n"); dot("A", 276, 705, 6, "n");
blob("A", 352, 745, 20, 14, 12, 7, "ponpl"); dot("A", 348, 771, 7, "n"); trail("A", "230,840 255,870", 14, 10, 8, "jplo");
// Nogales
blob("A", 628, 444, 16, 14, 18, 8, "jjol"); trail("A", "605,465 600,500 605,540", 34, 42, 8, "nnnnnnop"); blob("A", 660, 550, 28, 12, 16, 8, "nnpo"); dot("A", 673, 524, 7, "l");
area("A", "510,580 570,575 610,590 590,640 545,630 510,615", 15, 10, "mmjmpol", .7); trail("A", "625,560 635,600 660,655", 34, 50, 8, "nnnnnnj"); blob("A", 668, 605, 12, 18, 12, 10, "mm"); dot("A", 662, 580, 9, "l"); blob("A", 725, 585, 12, 20, 15, 8, "mmpo");
area("A", "505,640 545,630 560,680 530,715 480,690 455,670", 12, 9, "nnnaadn"); trail("A", "575,640 605,605", 28, 18, 9, "jnnj");
area("A", "450,670 500,680 565,710 540,745 490,755 460,720", 17, 10, "pppppl", .85); dot("A", 477, 720, 12, "p"); trail("A", "455,670 480,672", 14, 8, 8, "jn");
trail("A", "675,640 700,690 715,760 740,790", 48, 110, 9, "pppppppnp"); dot("A", 706, 692, 15, "p"); dot("A", 686, 712, 12, "j"); dot("A", 692, 740, 12, "j");
trail("A", "620,730 590,760 545,790 520,830", 44, 65, 10, "ppppppppl"); dot("A", 612, 745, 13, "j"); dot("A", 605, 755, 10, "j");
area("A", "470,830 540,790 640,830 620,870 430,870 440,830", 15, 10, "pppppppppppplj", .8); area("A", "690,750 750,790 790,830 770,870 690,870 670,820", 15, 10, "pppppppppppppj", .6);
area("A", "900,835 960,800 1000,830 1030,870 900,870", 18, 11, "ppppppm"); dot("A", 972, 828, 28, "p"); dot("A", 908, 793, 9, "p"); dot("A", 911, 802, 8, "p"); dot("A", 445, 857, 12, "j");
blob("A", 1025, 758, 18, 14, 10, 12, "p"); blob("A", 1062, 780, 18, 24, 12, 10, "pp"); dot("A", 1115, 748, 10, "d"); dot("A", 1088, 765, 9, "e"); blob("A", 1105, 775, 16, 16, 18, 9, "u"); blob("A", 1090, 798, 12, 8, 6, 7, "n"); dot("A", 1078, 828, 7, "a"); blob("A", 1128, 821, 14, 10, 10, 9, "u");
trail("A", "1130,680 1160,700 1155,745", 44, 42, 9, "uuuunu"); area("A", "1175,580 1240,575 1250,600 1220,650 1200,680 1185,640", 12, 9, "uuuuuunnd"); trail("A", "1180,515 1200,525 1190,570", 36, 35, 9, "nnnn"); blob("A", 1145, 540, 10, 18, 10, 8, "pu"); blob("A", 1155, 523, 8, 8, 6, 8, "u"); trail("A", "1230,580 1270,570", 16, 10, 8, "ndn"); trail("A", "1245,632 1275,650", 14, 7, 8, "n"); blob("A", 1160, 670, 20, 10, 10, 8, "o"); blob("A", 1200, 755, 16, 24, 18, 10, "pppl"); blob("A", 1240, 805, 22, 20, 18, 9, "ppoj"); blob("A", 1250, 855, 45, 14, 25, 9, "dunpd"); dot("A", 1285, 775, 9, "u"); dot("A", 1290, 735, 7, "d");
area("A", "1130,870 1160,852 1200,860 1210,870", 14, 11, "pp");
// Quillota valley
area("C", "440,0 640,0 660,60 540,70 560,120 520,90 470,70 430,20", 14, 10, "ppppppppppppplj", .9); area("C", "540,80 680,70 700,150 640,170 640,220 640,300 600,310 580,230 540,170", 15, 10, "ppppppppppppppplm", .85); area("C", "700,90 760,95 780,150 740,165 705,140", 15, 11, "pppp"); area("C", "690,0 740,20 800,70 830,100 790,130 740,100 700,50", 15, 10, "pppppppppj", .85);
trail("C", "590,280 620,310 630,280", 26, 30, 10, "pppmj"); blob("C", 480, 155, 50, 25, 30, 9, "pppppjlj"); blob("C", 435, 180, 20, 20, 12, 9, "pppj"); trail("C", "445,10 470,30 510,45", 25, 18, 10, "mjjm");
trail("C", "318,150 335,175", 22, 14, 8, "p"); trail("C", "385,165 350,195 340,210", 18, 16, 8, "p"); blob("C", 412, 148, 16, 10, 8, 8, "p"); dot("C", 400, 198, 14, "p"); dot("C", 403, 222, 15, "p"); blob("C", 348, 240, 10, 8, 7, 7, "pl"); blob("C", 225, 285, 12, 25, 9, 8, "p");
dot("C", 222, 345, 20, "p"); dot("C", 195, 342, 14, "p"); dot("C", 232, 332, 8, "j"); dot("C", 208, 330, 9, "p"); trail("C", "128,340 128,358", 8, 6, 7, "p"); dot("C", 160, 327, 5, "p"); dot("C", 80, 308, 12, "l"); dot("C", 90, 306, 9, "l"); dot("C", 78, 268, 8, "o"); dot("C", 70, 309, 7, "l");
dot("C", 360, 285, 19, "j"); dot("C", 348, 290, 11, "j"); dot("C", 306, 292, 8, "j"); dot("C", 415, 264, 12, "j"); trail("C", "370,300 400,295", 16, 10, 8, "n"); dot("C", 388, 314, 8, "p"); dot("C", 342, 325, 7, "l");
area("C", "440,260 490,260 500,300 470,315 430,300", 12, 9, "lllllolj"); trail("C", "455,255 490,275", 24, 10, 10, "jja"); dot("C", 468, 268, 7, "u"); blob("C", 545, 268, 12, 10, 6, 8, "l"); blob("C", 530, 320, 26, 34, 36, 10, "pppppo"); blob("C", 515, 315, 12, 12, 7, 9, "l");
dot("C", 402, 370, 16, "j"); dot("C", 412, 388, 12, "j"); blob("C", 362, 365, 14, 12, 9, 8, "jolp"); area("C", "360,390 390,370 450,375 440,410 400,420 360,410", 14, 11, "ppppppj"); dot("C", 398, 422, 21, "p"); dot("C", 443, 378, 11, "j"); trail("C", "460,365 500,385 540,415 590,415", 34, 60, 9, "ppppppp"); blob("C", 322, 430, 14, 12, 9, 8, "l"); trail("C", "340,437 360,437", 8, 4, 8, "n"); dot("C", 440, 442, 7, "p"); dot("C", 440, 460, 6, "n"); dot("C", 545, 350, 10, "p"); blob("C", 550, 240, 14, 10, 7, 8, "pmon"); blob("C", 600, 285, 16, 14, 9, 10, "jjm"); dot("C", 564, 286, 8, "j"); dot("C", 660, 243, 10, "p"); trail("C", "610,150 615,170", 14, 10, 9, "jaj"); dot("C", 683, 188, 10, "p");
blob("C", 415, 482, 18, 8, 9, 8, "laop"); dot("C", 411, 515, 14, "p"); blob("C", 492, 505, 28, 16, 20, 8, "nnopjl"); blob("C", 548, 530, 16, 20, 15, 8, "nn"); trail("C", "540,560 570,580 600,570", 34, 32, 8, "lnlaao"); blob("C", 590, 590, 16, 12, 10, 10, "jj"); trail("C", "545,595 565,620 560,655", 26, 28, 9, "lljll"); trail("C", "575,665 590,700 595,750", 20, 32, 9, "ppppn"); dot("C", 600, 547, 9, "u"); blob("C", 598, 568, 12, 14, 9, 8, "a"); dot("C", 520, 597, 9, "j"); dot("C", 522, 653, 8, "j"); dot("C", 523, 678, 7, "l"); dot("C", 477, 629, 7, "m"); dot("C", 471, 587, 6, "j"); trail("C", "460,565 467,548", 8, 5, 7, "nno"); blob("C", 605, 510, 20, 18, 12, 8, "ppn"); blob("C", 678, 487, 12, 8, 7, 8, "po"); dot("C", 665, 553, 7, "n"); dot("C", 696, 558, 6, "n"); trail("C", "640,585 700,590 735,590", 22, 28, 9, "lmollja"); blob("C", 605, 628, 8, 5, 5, 6, "p"); trail("C", "605,752 640,747", 6, 6, 8, "mmp"); dot("C", 376, 659, 7, "p"); dot("C", 290, 692, 6, "p"); dot("C", 292, 757, 9, "j"); blob("C", 520, 560, 10, 10, 4, 9, "l");
[[786, 621], [838, 629], [838, 652], [810, 680], [799, 687], [845, 687], [921, 708], [921, 559], [848, 658], [980, 674], [991, 676]].forEach(([x, y]) => dot("C", x, y, 6.5, "p")); dot("C", 869, 653, 6, "o"); dot("C", 897, 580, 7, "n"); dot("C", 930, 577, 6, "n"); blob("C", 875, 569, 12, 4, 5, 7, "l"); dot("C", 904, 548, 7, "l"); dot("C", 956, 553, 7, "l"); blob("C", 955, 632, 30, 22, 30, 8, "oolop");
// Llay Llay
area("C", "830,50 900,40 960,100 930,130 850,90", 16, 10, "pppppjl", .8); area("C", "930,0 1030,20 1050,60 1040,100 980,120 920,50", 15, 12, "ppppppp"); dot("C", 938, 57, 11, "j"); dot("C", 875, 62, 9, "j"); blob("C", 858, 132, 18, 8, 11, 8, "n"); trail("C", "820,135 825,175 810,210", 22, 26, 9, "jaanj"); dot("C", 848, 204, 10, "j"); area("C", "850,150 920,150 920,200 925,250 880,250 850,190", 19, 12, "pppppp"); dot("C", 897, 183, 24, "p"); trail("C", "830,245 850,290 865,330", 26, 30, 9, "njjloa"); blob("C", 855, 325, 16, 16, 7, 8, "p"); trail("C", "1070,160 1090,155", 14, 8, 8, "opo"); dot("C", 787, 196, 9, "p"); dot("C", 975, 38, 9, "n"); dot("C", 998, 62, 7, "a"); dot("C", 1040, 123, 18, "p"); dot("C", 915, 165, 8, "p");
dot("C", 1040, 234, 92, "p"); trail("C", "1045,180 1040,205 1022,230 1040,255", 22, 40, 13, "m"); blob("C", 1042, 262, 24, 8, 14, 9, "m"); dot("C", 1040, 165, 20, "p"); dot("C", 1075, 215, 18, "p"); dot("C", 1065, 243, 18, "p"); dot("C", 1030, 262, 16, "p"); dot("C", 1058, 290, 22, "p"); dot("C", 1090, 190, 15, "p"); dot("C", 1109, 210, 11, "m"); dot("C", 1112, 235, 8, "m");
area("C", "1120,60 1150,20 1230,40 1220,70 1150,80", 16, 12, "pp"); dot("C", 1175, 50, 25, "p"); dot("C", 1215, 68, 20, "p"); dot("C", 1255, 72, 10, "p"); dot("C", 1130, 18, 7, "p"); dot("C", 1098, 50, 6, "u"); dot("C", 1095, 68, 7, "n"); trail("C", "1205,115 1250,130 1290,165", 30, 36, 9, "ujdmue"); blob("C", 1195, 180, 44, 24, 46, 9, "nnn"); blob("C", 1165, 228, 32, 24, 46, 8, "uuu"); trail("C", "1140,175 1130,220", 14, 8, 8, "unm"); blob("C", 1165, 290, 22, 20, 26, 9, "mmmun"); trail("C", "1215,240 1280,270", 34, 44, 9, "upmupu"); blob("C", 1240, 285, 45, 22, 40, 9, "ppp"); blob("C", 1270, 200, 20, 26, 18, 12, "pp"); trail("C", "1100,125 1135,132", 10, 5, 7, "no"); blob("C", 1275, 50, 16, 20, 12, 9, "mdj"); trail("C", "1210,25 1260,35", 16, 9, 7, "unu"); dot("D", 5, 250, 20, "p"); dot("D", 5, 295, 12, "p");
blob("D", 10, 135, 30, 24, 16, 8, "puao");
// Panquehue
area("B", "90,680 120,655 150,680 150,710 110,700", 15, 11, "pp"); dot("B", 137, 706, 8, "u"); trail("B", "190,660 235,640", 28, 22, 9, "uuunad"); trail("B", "155,740 210,740 240,700 265,700", 28, 42, 9, "mnppumn"); area("B", "0,830 50,810 80,860 0,870", 18, 10, "pupmo"); dot("B", 250, 810, 52, "p"); dot("B", 182, 813, 24, "p"); dot("B", 212, 805, 8, "m"); trail("B", "125,800 145,790", 20, 8, 9, "umu"); dot("B", 78, 818, 14, "p"); dot("D", 140, 60, 76, "p"); dot("D", 148, 58, 7, "l"); dot("D", 165, 54, 7, "l"); dot("D", 170, 60, 7, "l"); trail("D", "5,10 60,40", 25, 15, 9, "upupm"); dot("D", 97, 15, 9, "j"); blob("B", 340, 770, 14, 26, 20, 9, "uuna"); dot("B", 328, 798, 14, "m"); dot("B", 322, 790, 9, "m"); dot("B", 5, 790, 9, "p"); dot("B", 10, 800, 9, "p"); dot("B", 378, 775, 7, "a");
// Putaendo
trail("B", "665,85 620,110", 22, 7, 8, "nnd"); dot("B", 630, 108, 12, "d"); trail("B", "600,135 550,160", 20, 16, 8, "dn"); trail("B", "560,115 530,150 490,175", 36, 60, 8, "nnnnd"); trail("B", "560,150 500,190 455,225", 30, 46, 9, "nnd"); trail("B", "480,180 440,220 395,255", 34, 50, 10, "ddnndu"); blob("B", 450, 260, 26, 18, 28, 9, "ddn"); trail("B", "395,235 350,265 340,340", 34, 55, 9, "ndduun"); trail("B", "365,290 355,370", 45, 46, 9, "nduund"); blob("B", 372, 372, 14, 6, 6, 8, "on"); blob("B", 442, 366, 14, 8, 9, 8, "naa"); dot("B", 472, 222, 9, "u");
trail("B", "345,410 325,500 300,620", 34, 180, 11, "dddddddddn"); dot("B", 300, 512, 12, "m"); trail("B", "265,575 255,640", 30, 20, 10, "dddun"); trail("B", "375,480 430,480", 40, 36, 8, "nndu"); blob("B", 392, 512, 20, 20, 26, 8, "nuun"); blob("B", 414, 545, 14, 9, 9, 9, "um"); trail("B", "380,430 415,480", 22, 10, 8, "n"); blob("B", 320, 590, 20, 14, 12, 8, "nd"); blob("B", 270, 672, 14, 8, 9, 8, "u"); dot("B", 398, 336, 5, "o");
// San Felipe, Los Andes
trail("B", "650,490 620,530 590,575 565,610", 38, 80, 10, "ooooooooe"); dot("B", 652, 568, 6, "o"); blob("B", 555, 570, 16, 28, 20, 8, "umuun"); trail("B", "590,525 630,525", 14, 14, 8, "oo");
area("B", "320,620 370,600 375,660 345,685 305,650", 12, 8, "uuun"); area("B", "370,655 430,635 450,600 490,570 495,620 550,630 580,600 620,650 620,680 500,690 380,680", 13, 8, "uuuuuuund", .95); trail("B", "450,575 460,610", 24, 10, 9, "mu");
area("B", "400,720 470,670 640,670 640,640 690,645 690,690 760,690 765,760 740,770 760,810 755,870 385,870 410,800 385,740", 12, 8.5, "uuuuuuuuuuuuuuddn");
area("B", "645,645 690,640 705,690 650,690", 11, 9, "uuu"); dot("B", 690, 655, 14, "m"); dot("B", 705, 662, 11, "p"); dot("B", 602, 637, 12, "m"); dot("B", 750, 740, 12, "m"); dot("B", 520, 657, 9, "m"); dot("B", 535, 653, 8, "p"); blob("B", 605, 705, 36, 22, 26, 10, "ddde"); blob("B", 740, 700, 20, 18, 12, 9, "nmuo"); dot("B", 760, 660, 6, "o"); dot("B", 780, 630, 6, "n"); blob("B", 410, 850, 26, 24, 26, 10, "dnn"); blob("B", 540, 725, 26, 22, 12, 9, "ddu"); blob("B", 730, 800, 28, 30, 24, 9, "unnd"); dot("B", 803, 865, 7, "n");
area("D", "390,0 760,0 760,60 720,70 690,90 600,50 615,130 590,160 570,200 480,210 400,200 385,160 400,100", 12, 8.5, "uuuuuuuuuuuuuudd"); area("D", "560,240 600,230 600,280 570,280", 12, 9, "uu"); area("D", "480,200 570,170 640,150 700,160 690,210 620,260 500,240", 12.5, 9, "uuuddnu", .9); area("D", "615,170 690,150 700,190 640,200", 14, 11, "ddd", .7); dot("D", 700, 162, 11, "j"); dot("D", 484, 250, 12, "j"); dot("D", 484, 302, 9, "u"); dot("D", 488, 308, 9, "u"); trail("D", "395,210 430,215", 12, 12, 8, "pmun"); area("D", "710,110 740,90 780,110 770,150 720,145", 11, 8, "nnnudp"); dot("D", 814, 70, 12, "n"); dot("D", 803, 25, 6, "n"); dot("D", 798, 133, 6, "u"); blob("D", 755, 70, 26, 18, 12, 9, "uopnd"); trail("D", "790,95 870,150", 16, 20, 8, "nn"); trail("D", "930,155 1010,155", 10, 14, 9, "nn"); dot("D", 950, 170, 8, "n"); dot("D", 950, 182, 8, "n"); trail("D", "1025,100 1025,130", 4, 4, 8, "n"); dot("D", 1050, 154, 7, "n"); dot("D", 1121, 232, 8, "n"); dot("D", 1260, 294, 7, "n"); blob("D", 805, 230, 12, 12, 8, 8, "u"); trail("D", "560,210 640,240", 22, 20, 8, "nu"); dot("D", 702, 228, 5, "n"); dot("D", 1026, 72, 6, "n"); dot("D", 842, 154, 7, "n"); blob("D", 430, 15, 36, 20, 14, 10, "dd"); blob("D", 480, 50, 30, 20, 12, 9, "dud"); blob("D", 490, 110, 40, 40, 30, 9, "ddu"); dot("D", 754, 143, 7, "p"); dot("D", 755, 157, 7, "p");
byId("dots").innerHTML = out.join("");

const label = (k, x, y, t, len, cls = "", size = 11) =>
  `<text class="${cls}" x="${origin[k][0] + x / 3}" y="${origin[k][1] + y / 3}" font-size="${size}" textLength="${len}" lengthAdjust="spacingAndGlyphs">${t}</text>`;
byId("labels").innerHTML = [
  ["A", 131, 396, "La Laguna", 50], ["A", 131, 431, "de Zapallar", 54], ["A", 150, 660, "Puchuncaví", 56], ["A", 618, 686, "Nogales", 39], ["A", 620, 822, "Calera", 31], ["A", 732, 826, "Hijuelas", 38],
  ["B", 387, 402, "Putaendo", 45.5], ["B", 369, 722, "San Felipe", 51], ["B", 131, 775, "Panquehue", 54], ["B", 628, 840, "San", 18.5],
  ["D", 629, 36, "Esteban", 39], ["D", 444, 55, "Rinconada", 51], ["D", 645, 102, "Los Andes", 50.5],
  ["C", 562, 85, "La Cruz", 38], ["C", 517, 220, "Quillota", 36], ["C", 1142, 117, "Llay Llay", 42], ["C", 478, 538, "Limache", 40], ["C", 652, 521, "Olmué", 31], ["C", 247, 630, "Villa", 20.5], ["C", 247, 667, "Alemana", 42], ["C", 125, 668, "Quilpué", 36.5], ["C", 1213, 753, "Tiltil", 19],
  ["C", 896, 405, "Parque", 29, "park", 9.5], ["C", 896, 436, "nacional de", 46, "park", 9.5], ["C", 896, 467, "La Campana", 51, "park", 9.5],
  ["D", 1207, 326, "Reserva", 34, "park", 9.5], ["D", 1207, 356, "Naciona", 33, "park", 9.5], ["D", 1207, 386, "Río Blanco", 44, "park", 9.5],
  ["A", 45, 93, "P", 7], ["A", 1243, 93, "VALPARAÍSO", 91.5, "region", 12]
].map(a => label(...a)).join("");
```
